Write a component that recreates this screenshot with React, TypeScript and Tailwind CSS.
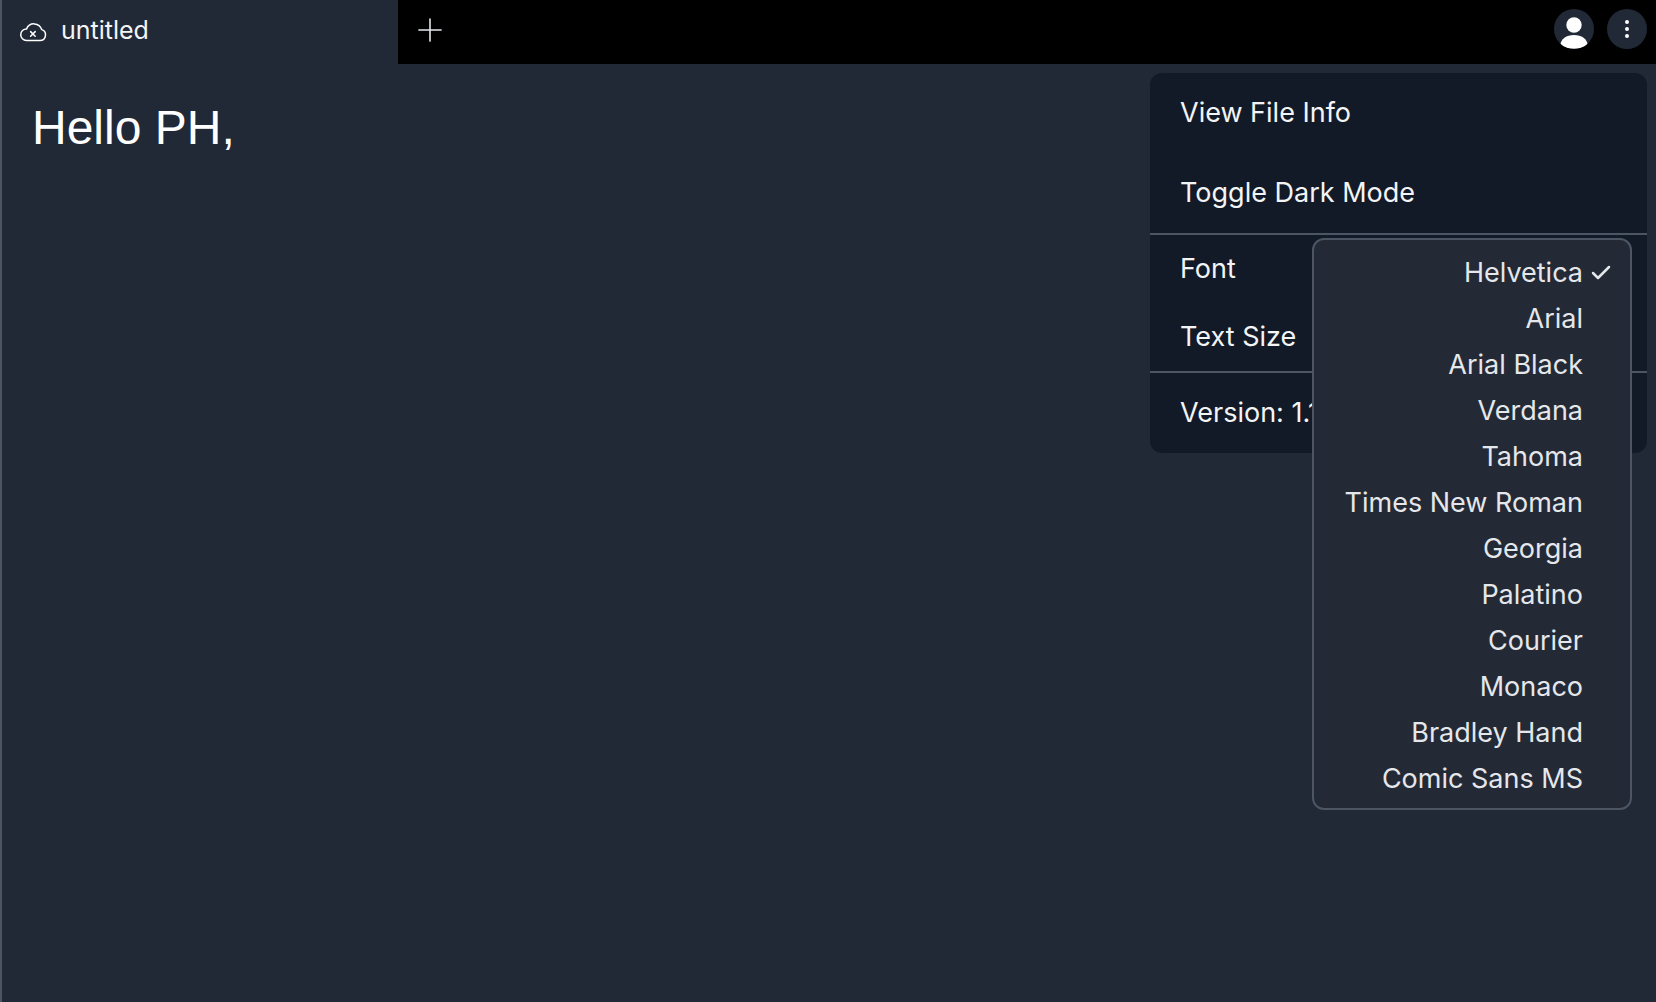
import { Check, EllipsisVertical, Plus } from "lucide-react";

const fonts = [
  "Helvetica",
  "Arial",
  "Arial Black",
  "Verdana",
  "Tahoma",
  "Times New Roman",
  "Georgia",
  "Palatino",
  "Courier",
  "Monaco",
  "Bradley Hand",
  "Comic Sans MS",
];

function CloudX() {
  return (
    <svg width="28" height="23" viewBox="0 0 28 23" fill="none" stroke="currentColor" strokeWidth="1.5" strokeLinecap="round" strokeLinejoin="round">
      <path d="M7.5 21.5h13.5a5.6 5.6 0 0 0 1.7-10.9A8 8 0 0 0 7.6 9.9a5.8 5.8 0 0 0-.1 11.6z" />
      <path d="M11.6 12.6l4.6 4.6M16.2 12.6l-4.6 4.6" />
    </svg>
  );
}

function UserAvatar() {
  return (
    <svg width="40" height="40" viewBox="0 0 40 40" className="rounded-full bg-[#212936]">
      <circle cx="20" cy="16" r="7.7" fill="#fff" />
      <path d="M6.5 36c0-6 6-10 13.500-10s13.500 4 13.500 10c-3.500 2.700-8 3.700-13.500 3.700S10 38.700 6.500 36z" fill="#fff" />
    </svg>
  );
}

function App() {
  return (
    <div className="relative flex h-[1002px] flex-col border-l-2 border-[#4b5563] bg-[#212936] font-['Inter',sans-serif] text-white">
      <header className="flex h-16 items-center bg-black">
        <div className="flex h-16 w-[396px] items-center bg-[#212936] pb-1 pl-[17px]">
          <CloudX />
          <span className="ml-[14px] text-[25px] leading-none text-[#f3f4f6]">untitled</span>
        </div>
        <button className="flex w-16 items-center justify-center pb-1 text-[#e5e7eb]">
          <Plus size={38} strokeWidth={1} />
        </button>
        <div className="ml-auto flex items-center gap-[13px] pr-[9px] pb-[6px]">
          <UserAvatar />
          <button className="flex h-10 w-10 items-center justify-center rounded-full bg-[#212936] text-white">
            <EllipsisVertical size={24} strokeWidth={2} />
          </button>
        </div>
      </header>

      <main className="pt-[32px] pl-[30px]">
        <p className="font-['Liberation_Sans',sans-serif] text-[48px] leading-[64px]">Hello PH,</p>
      </main>

      <div className="absolute top-[73px] right-[9px] w-[497px] rounded-xl bg-[#131a27] text-[27px] leading-[34px] text-[#f3f4f6]">
        <div className="flex h-20 items-center px-[30px]">View File Info</div>
        <div className="flex h-20 items-center px-[30px]">Toggle Dark Mode</div>
        <div className="h-0.5 bg-[#4b5563]" />
        <div className="flex h-[68px] items-center px-[30px]">Font</div>
        <div className="flex h-[68px] items-center px-[30px]">Text Size</div>
        <div className="h-0.5 bg-[#4b5563]" />
        <div className="flex h-20 items-center px-[30px]">Version: 1.1.0</div>

        <div className="absolute top-[165px] right-[15px] w-[320px] rounded-xl border-2 border-[#4b5563] bg-[#232a36] pt-[10px] pb-[6px] text-[#e5e7eb]">
          {fonts.map((font, i) => (
            <div key={font} className="relative flex h-[46px] items-center justify-end pr-[47px]">
              {font}
              {i === 0 && <Check size={24} strokeWidth={2.5} className="absolute right-[17px]" />}
            </div>
          ))}
        </div>
      </div>
    </div>
  );
}

export default App;
